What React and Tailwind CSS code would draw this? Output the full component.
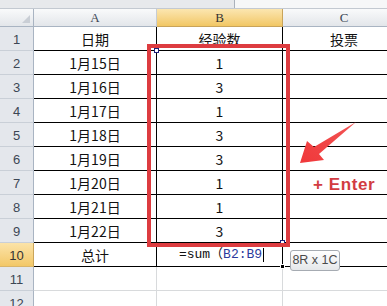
import React from "react";

const rows = [
  { n: 1, a: "日期", b: "经验数", c: "投票" },
  { n: 2, a: "1月15日", b: "1" },
  { n: 3, a: "1月16日", b: "3" },
  { n: 4, a: "1月17日", b: "1" },
  { n: 5, a: "1月18日", b: "3" },
  { n: 6, a: "1月19日", b: "3" },
  { n: 7, a: "1月20日", b: "1" },
  { n: 8, a: "1月21日", b: "1" },
  { n: 9, a: "1月22日", b: "3" },
];

const cellFont = { fontFamily: '"Noto Sans CJK SC", sans-serif' };

function RowHead({ n, active }) {
  return (
    <div
      className={`w-[34px] h-full shrink-0 flex items-end justify-center pb-[3px] border-r border-b text-[13px] leading-[15px] ${
        active
          ? "bg-gradient-to-b from-[#fbe3a8] to-[#f3c867] border-r-[#c9a45a] border-b-[#d9b56a] text-[#333]"
          : "bg-[#e4e7ec] border-r-[#a9b4c2] border-b-[#c9cfd7] text-[#3c4654]"
      }`}
      style={{ fontFamily: '"Liberation Sans", sans-serif' }}
    >
      {n}
    </div>
  );
}

function DataRow({ n, a, b, c }) {
  return (
    <div className="flex h-[24px]" style={cellFont}>
      <RowHead n={n} />
      <div className="w-[123px] shrink-0 flex items-end justify-center pb-[3px] border-r border-b border-black text-[14px] leading-[16px] text-[#111]">
        {a}
      </div>
      <div className="w-[126px] shrink-0 flex items-end justify-center pb-[3px] border-r border-b border-black text-[14px] leading-[16px] text-[#111]">
        {b}
      </div>
      <div className="w-[122px] shrink-0 flex items-end justify-center pb-[3px] border-b border-black text-[14px] leading-[16px] text-[#111]">
        {c}
      </div>
    </div>
  );
}

function EmptyRow({ n }) {
  return (
    <div className="flex h-[24px]">
      <RowHead n={n} />
      <div className="w-[123px] shrink-0 border-r border-b border-[#d8dadc]" />
      <div className="w-[126px] shrink-0 border-r border-b border-[#d8dadc]" />
      <div className="w-[122px] shrink-0 border-b border-[#d8dadc]" />
    </div>
  );
}

function ColHead({ label, width, active, last }) {
  return (
    <div
      className={`${width} shrink-0 h-full flex items-center justify-center border-b text-[13px] ${
        last ? "" : "border-r"
      } ${
        active
          ? "bg-gradient-to-b from-[#fbe6b0] to-[#f2c763] border-b-[#c9a45a] border-r-[#c9a45a] text-[#333]"
          : "bg-gradient-to-b from-[#f9fafb] to-[#e3e6ea] border-b-[#a9b4c2] border-r-[#c6ccd4] text-[#3c4654]"
      }`}
      style={{ fontFamily: '"Liberation Serif", serif' }}
    >
      {label}
    </div>
  );
}

export default function App() {
  return (
    <div className="relative w-[387px] h-[306px] overflow-hidden bg-white">
      {/* formula bar edge */}
      <div className="flex h-[9px] border-b border-[#c3c9d1]">
        <div className="w-[235px] bg-[#e7e9ec] border-r border-[#aab1bb]" />
        <div className="flex-1 bg-[#f6f7f8]" />
      </div>

      {/* column headers */}
      <div className="flex h-[18px]">
        <div className="relative w-[34px] shrink-0 h-full bg-gradient-to-b from-[#f9fafb] to-[#e3e6ea] border-r border-b border-[#a9b4c2]">
          <div className="absolute right-[3px] bottom-[3px] w-0 h-0 border-l-[8px] border-l-transparent border-b-[8px] border-b-[#c9ced5]" />
        </div>
        <ColHead label="A" width="w-[123px]" />
        <ColHead label="B" width="w-[126px]" active />
        <ColHead label="C" width="w-[122px]" last />
      </div>

      {rows.map((r) => (
        <DataRow key={r.n} {...r} />
      ))}

      {/* total row with the formula being typed */}
      <div className="flex h-[24px]" style={cellFont}>
        <RowHead n={10} active />
        <div className="w-[123px] shrink-0 flex items-end justify-center pb-[3px] border-r border-b border-black text-[14px] leading-[16px] text-[#111]">
          总计
        </div>
        <div className="relative w-[126px] shrink-0 flex items-end justify-center pl-[4px] pb-[3px] border-r border-b border-black text-[13px] leading-[16px] text-[#111]">
          <span style={{ fontFamily: '"Liberation Mono", "Noto Sans CJK SC", monospace' }}>
            =sum（<span className="text-[#2b3a9c]">B2:B9</span>
          </span>
          <span className="w-px h-[14px] bg-black ml-[1px] mb-[1px]" />
          <div className="absolute right-[-3px] bottom-[-3px] w-[5px] h-[5px] bg-black border border-white" />
        </div>
        <div className="w-[122px] shrink-0 border-b border-black" />
      </div>

      <EmptyRow n={11} />
      <EmptyRow n={12} />

      {/* copy range marquee around B2:B9 */}
      <div className="absolute left-[156px] top-[50px] w-[127px] h-[193px] border border-dashed border-black" />
      <div className="absolute left-[154px] top-[48px] w-[5px] h-[5px] border border-[#1c1f7a] bg-white" />
      <div className="absolute left-[280px] top-[240px] w-[5px] h-[5px] border border-[#1c1f7a] bg-white" />

      {/* highlight frame */}
      <div className="absolute left-[147px] top-[44px] w-[143px] h-[203px] border-4 border-[#dd3c40]" />

      {/* pointer arrow */}
      <svg className="absolute left-[290px] top-[112px]" width="80" height="60" viewBox="0 0 80 60">
        <defs>
          <linearGradient id="arrowFill" x1="0" y1="1" x2="1" y2="0">
            <stop offset="0" stopColor="#f0383a" />
            <stop offset="1" stopColor="#f25454" />
          </linearGradient>
        </defs>
        <polygon
          points="10,51 17,29 24,35 66,10 29,42 34,48"
          fill="url(#arrowFill)"
        />
      </svg>

      <div
        className="absolute left-[313px] top-[175px] text-[17px] leading-[20px] font-bold tracking-[0.6px] text-[#d23c42]"
        style={{ fontFamily: '"Liberation Sans", sans-serif' }}
      >
        + Enter
      </div>

      {/* range size tip */}
      <div
        className="absolute left-[290px] top-[250px] w-[50px] h-[21px] rounded-[3px] border border-[#a6abb2] bg-gradient-to-b from-white to-[#e5e7ea] flex items-center justify-center text-[12.5px] text-[#4a4a4a]"
        style={{ fontFamily: '"Liberation Sans", sans-serif' }}
      >
        8R x 1C
      </div>
    </div>
  );
}
